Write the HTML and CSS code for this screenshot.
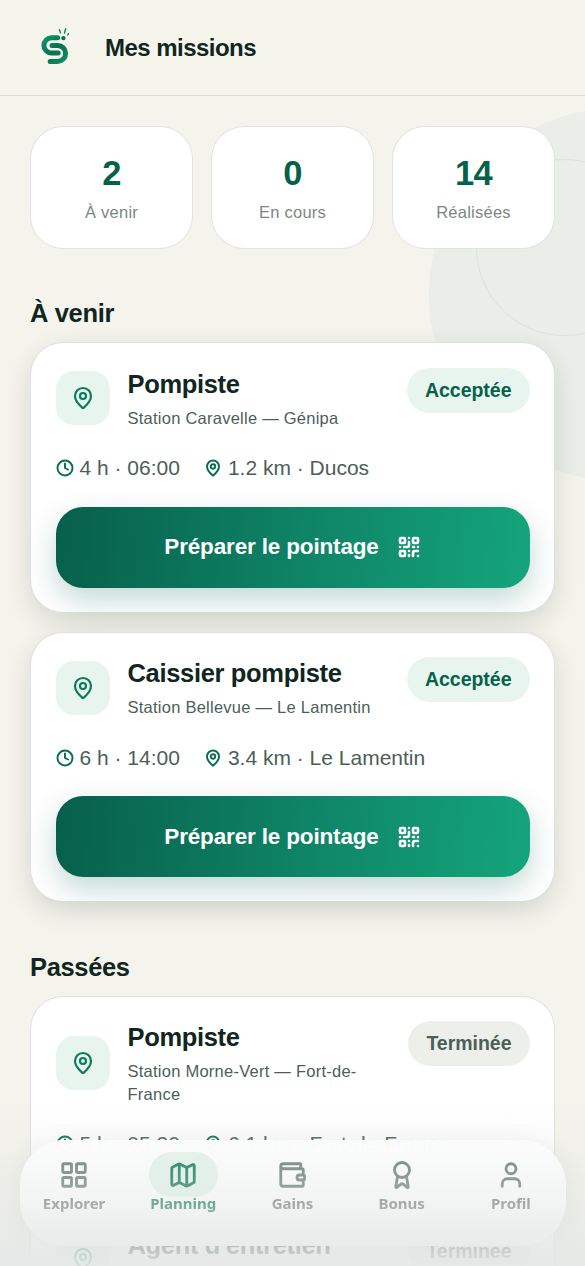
FILE: index.html
```html
<!DOCTYPE html>
<html lang="fr">
<head>
<meta charset="utf-8">
<meta name="viewport" content="width=device-width, initial-scale=1">
<title>Mes missions</title>
<link rel="stylesheet" href="styles.css">
</head>
<body>
<svg class="sprite" aria-hidden="true">
  <symbol id="pin" viewBox="0 0 24 24"><path d="M20 10c0 4.993-5.539 10.193-7.399 11.799a1 1 0 0 1-1.202 0C9.539 20.193 4 14.993 4 10a8 8 0 0 1 16 0"/><circle cx="12" cy="10" r="3"/></symbol>
  <symbol id="clock" viewBox="0 0 24 24"><circle cx="12" cy="12" r="10"/><path d="M12 6v6l4 2"/></symbol>
  <symbol id="qr" viewBox="0 0 24 24"><rect x="3" y="3" width="5" height="5" rx="1"/><rect x="16" y="3" width="5" height="5" rx="1"/><rect x="3" y="16" width="5" height="5" rx="1"/><path d="M21 16h-3a2 2 0 0 0-2 2v3M21 21v.01M12 7v3a2 2 0 0 1-2 2H7M3 12h.01M12 3h.01M12 16v.01M16 12h1M21 12v.01M12 21v-1"/></symbol>
</svg>
<div class="screen">
  <div class="blob"></div>
  <div class="ring"></div>

  <header class="topbar">
    <svg class="logo" viewBox="30 22.5 51 51" fill="none" stroke-linecap="round">
      <defs><linearGradient id="lg" gradientUnits="userSpaceOnUse" x1="42" y1="36" x2="68" y2="64"><stop offset="0" stop-color="#129a6c"/><stop offset=".5" stop-color="#08704f"/><stop offset="1" stop-color="#0f9467"/></linearGradient></defs>
      <g stroke="url(#lg)" stroke-width="5">
        <path d="M57.6 38.2H51.6a7.6 7.6 0 0 0 0 15.4H58.2"/>
        <path d="M52 45.9H57.6a8 8 0 0 1 0 16H50.2"/>
      </g>
      <circle cx="63.4" cy="38.6" r="2.2" fill="#08704f"/>
      <path d="M59.4 30.2l1.2 3.2M65.7 29.2l-1.2 4.3M68.6 34.2l-1 1.2" stroke="#12855f" stroke-width="1.4"/>
    </svg>
    <h1 class="topbar-title">Mes missions</h1>
  </header>

  <main class="content">
    <div class="stats">
      <div class="stat"><b class="stat-value">2</b><span class="stat-label">À venir</span></div>
      <div class="stat"><b class="stat-value">0</b><span class="stat-label">En cours</span></div>
      <div class="stat"><b class="stat-value">14</b><span class="stat-label">Réalisées</span></div>
    </div>

    <h2 class="section-title">À venir</h2>
    <div class="cards">
      <article class="card raised">
        <div class="card-head">
          <span class="tile"><svg class="icon tile-icon"><use href="#pin"/></svg></span>
          <div class="card-text"><h3 class="card-title">Pompiste</h3><p class="card-sub">Station Caravelle — Génipa</p></div>
          <span class="badge">Acceptée</span>
        </div>
        <div class="meta">
          <span class="meta-item"><svg class="icon meta-icon"><use href="#clock"/></svg>4 h · 06:00</span>
          <span class="meta-item"><svg class="icon meta-icon"><use href="#pin"/></svg>1.2 km · Ducos</span>
        </div>
        <button class="cta">Préparer le pointage<svg class="icon cta-icon"><use href="#qr"/></svg></button>
      </article>
      <article class="card raised">
        <div class="card-head">
          <span class="tile"><svg class="icon tile-icon"><use href="#pin"/></svg></span>
          <div class="card-text"><h3 class="card-title">Caissier pompiste</h3><p class="card-sub">Station Bellevue — Le Lamentin</p></div>
          <span class="badge">Acceptée</span>
        </div>
        <div class="meta">
          <span class="meta-item"><svg class="icon meta-icon"><use href="#clock"/></svg>6 h · 14:00</span>
          <span class="meta-item"><svg class="icon meta-icon"><use href="#pin"/></svg>3.4 km · Le Lamentin</span>
        </div>
        <button class="cta">Préparer le pointage<svg class="icon cta-icon"><use href="#qr"/></svg></button>
      </article>
    </div>

    <h2 class="section-title">Passées</h2>
    <div class="cards">
      <article class="card">
        <div class="card-head">
          <span class="tile"><svg class="icon tile-icon"><use href="#pin"/></svg></span>
          <div class="card-text"><h3 class="card-title">Pompiste</h3><p class="card-sub">Station Morne-Vert — Fort-de-France</p></div>
          <span class="badge done">Terminée</span>
        </div>
        <div class="meta">
          <span class="meta-item"><svg class="icon meta-icon"><use href="#clock"/></svg>5 h · 05:30</span>
          <span class="meta-item"><svg class="icon meta-icon"><use href="#pin"/></svg>6.1 km · Fort-de-France</span>
        </div>
      </article>
      <article class="card">
        <div class="card-head">
          <span class="tile"><svg class="icon tile-icon"><use href="#pin"/></svg></span>
          <div class="card-text"><h3 class="card-title">Agent d'entretien</h3></div>
          <span class="badge done">Terminée</span>
        </div>
      </article>
    </div>
  </main>

  <nav class="tabs">
    <a class="tab"><span class="tab-pill"><svg class="icon tab-icon" viewBox="0 0 24 24"><rect x="3" y="3" width="7" height="7" rx="1"/><rect x="14" y="3" width="7" height="7" rx="1"/><rect x="14" y="14" width="7" height="7" rx="1"/><rect x="3" y="14" width="7" height="7" rx="1"/></svg></span>Explorer</a>
    <a class="tab active"><span class="tab-pill"><svg class="icon tab-icon" viewBox="0 0 24 24"><path d="M14.106 5.553a2 2 0 0 0 1.788 0l3.659-1.83A1 1 0 0 1 21 4.619v12.764a1 1 0 0 1-.553.894l-4.553 2.277a2 2 0 0 1-1.788 0l-4.212-2.106a2 2 0 0 0-1.788 0l-3.659 1.83A1 1 0 0 1 3 19.381V6.618a1 1 0 0 1 .553-.894l4.553-2.277a2 2 0 0 1 1.788 0zM15 5.764v15M9 3.236v15"/></svg></span>Planning</a>
    <a class="tab"><span class="tab-pill"><svg class="icon tab-icon" viewBox="0 0 24 24"><path d="M19 7V4a1 1 0 0 0-1-1H5a2 2 0 0 0 0 4h15a1 1 0 0 1 1 1v4h-3a2 2 0 0 0 0 4h3a1 1 0 0 0 1-1v-2a1 1 0 0 0-1-1M3 5v14a2 2 0 0 0 2 2h15a1 1 0 0 0 1-1v-4"/></svg></span>Gains</a>
    <a class="tab"><span class="tab-pill"><svg class="icon tab-icon" viewBox="0 0 24 24"><circle cx="12" cy="8" r="6"/><path d="m15.477 12.89 1.515 8.526a.5.5 0 0 1-.81.47l-3.58-2.687a1 1 0 0 0-1.197 0l-3.586 2.686a.5.5 0 0 1-.81-.469l1.514-8.526"/></svg></span>Bonus</a>
    <a class="tab"><span class="tab-pill"><svg class="icon tab-icon" viewBox="0 0 24 24"><circle cx="12" cy="7" r="4"/><path d="M19 21v-2a4 4 0 0 0-4-4H9a4 4 0 0 0-4 4v2"/></svg></span>Profil</a>
  </nav>
  <div class="fade"></div>
</div>
</body>
</html>
```

FILE: styles.css
```css
* { box-sizing: border-box; margin: 0; }
body { background: #f4f3ec; font-family: "Liberation Sans", Arial, sans-serif; color: #10261f; }
.sprite { position: absolute; width: 0; height: 0; }
.icon { fill: none; stroke: currentColor; stroke-width: 2; stroke-linecap: round; stroke-linejoin: round; flex: none; }
.screen { position: relative; height: 1266px; overflow: hidden; }

.blob { position: absolute; left: 428.5px; top: 107.5px; width: 382px; height: 373px; border-radius: 50%; background: #eaede8; }
.ring { position: absolute; left: 476px; top: 159px; width: 177px; height: 177px; border-radius: 50%; border: 1px solid #dbe3dd; }

.topbar { position: relative; display: flex; align-items: center; gap: 24px; height: 96px; padding: 0 30px; background: #f5f5ec; border-bottom: 1px solid #d9ddd6; }
.logo { width: 51px; height: 51px; }
.topbar-title { font-size: 24px; line-height: 30px; letter-spacing: -.022em; }

.content { position: relative; padding: 30px 30px 0; }
.stats { display: grid; grid-template-columns: repeat(3, 1fr); gap: 18px; }
.stat { display: flex; flex-direction: column; align-items: center; gap: 9px; height: 122.5px; padding-top: 28px; background: #fff; border: 1px solid #dfe5e1; border-radius: 33px; }
.stat-value { font-size: 34.5px; line-height: 36px; letter-spacing: -.02em; color: #06614b; }
.stat-label { font-size: 16.5px; line-height: 24px; letter-spacing: .015em; color: #7b8783; }

.section-title { margin: 48.5px 0 13px; font-size: 25.5px; line-height: 32px; letter-spacing: -.014em; }
.cards { display: flex; flex-direction: column; gap: 19px; }
.card { padding: 24.5px 24.5px 24px; background: #fff; border: 1px solid #dde2df; border-radius: 33px; }
.raised { box-shadow: 0 9px 27px rgba(16, 45, 36, .12); }
.card-head { display: flex; align-items: center; gap: 18px; }
.tile { display: grid; place-items: center; flex: none; width: 54px; height: 54px; border-radius: 18px; background: #e8f5ef; color: #0b7b5c; }
.tile-icon { width: 24px; height: 24px; stroke-width: 2.2; }
.card-text { flex: 1; min-width: 0; min-height: 61.5px; }
.card-title { font-size: 25.5px; line-height: 33px; letter-spacing: -.013em; white-space: nowrap; }
.card-sub { margin-top: 6px; font-size: 16.5px; line-height: 22.5px; letter-spacing: .015em; color: #4b5f58; }
.badge { align-self: flex-start; padding: 0 18px; border-radius: 23px; background: #e8f5ef; color: #06614b; font-size: 19.5px; font-weight: 700; line-height: 45px; letter-spacing: -.001em; }
.done { background: #edf0ea; color: #4b5f58; }
.meta { display: flex; gap: 24px; margin-top: 24px; font-size: 21px; line-height: 30px; color: #4b5f58; }
.meta-item { display: flex; align-items: center; gap: 6px; white-space: nowrap; }
.meta-icon { width: 18px; height: 18px; color: #0a6c52; stroke-width: 2.6; }
.cta { display: flex; align-items: center; justify-content: center; gap: 18px; width: 100%; height: 81px; margin-top: 23.5px; padding-top: 1px; border: 0; border-radius: 27px; background: linear-gradient(96deg, #075f4a 0%, #0e8265 50%, #14a57c 100%); box-shadow: 0 12px 30px rgba(6, 97, 75, .24); color: #fff; font: 700 22.5px/30px "Liberation Sans", Arial, sans-serif; letter-spacing: -.007em; }
.cta-icon { width: 24px; height: 24px; stroke-width: 2.6; }

.tabs { position: absolute; left: 19.5px; right: 19.5px; top: 1140px; height: 106px; display: grid; grid-template-columns: repeat(5, 1fr); padding-top: 12px; border-radius: 45px; background: rgba(255, 255, 255, .97); -webkit-backdrop-filter: blur(15px); backdrop-filter: blur(15px); box-shadow: 0 6px 27px rgba(16, 45, 36, .1); }
.tab { display: flex; flex-direction: column; align-items: center; color: #68746f; font: 700 15px/20px "Noto Sans", sans-serif; }
.tab-pill { display: grid; place-items: center; width: 69px; height: 45px; margin-bottom: -4.5px; border-radius: 23px; color: #66776f; }
.tab-icon { width: 30px; height: 30px; stroke-width: 2.25; }
.active { color: #06734f; }
.active .tab-pill { background: #e4f4ec; color: #06714f; }
.fade { position: absolute; left: 0; right: 0; bottom: 0; height: 170px; background: linear-gradient(to bottom, rgba(228, 231, 230, 0), rgba(228, 231, 230, .16) 30%, rgba(228, 231, 230, .46) 62%, rgba(228, 231, 230, .8) 88%, rgba(228, 231, 230, .93)); pointer-events: none; }
```
